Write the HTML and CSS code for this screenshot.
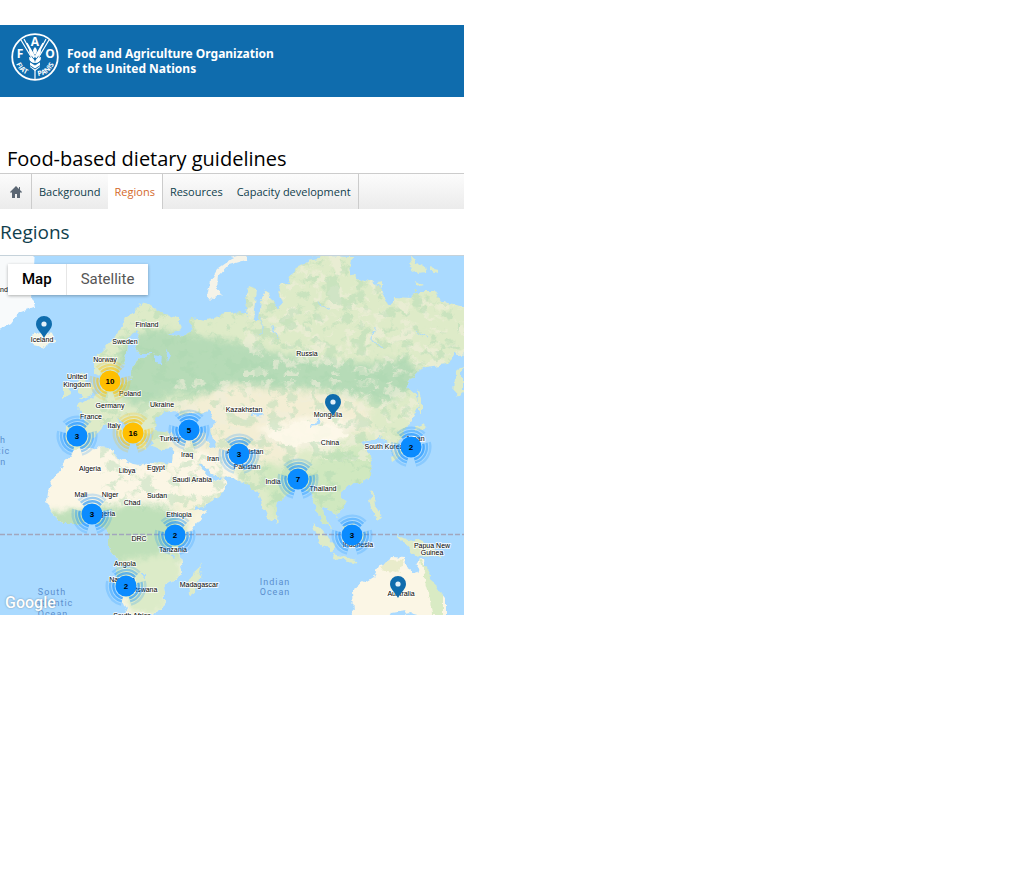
FILE: index.html
```html
<!DOCTYPE html>
<html lang="en">
<head>
<meta charset="utf-8">
<meta name="viewport" content="width=device-width, initial-scale=1">
<title>Food-based dietary guidelines</title>
<link rel="stylesheet" href="styles.css">
</head>
<body>
<div class="page">
  <header class="banner">
    <a class="brand" href="#">
      <svg class="brand-logo" viewBox="0 0 48 48" aria-hidden="true">
        <circle cx="24" cy="24" r="22.8" fill="none" stroke="#fff" stroke-width="1.8"/>
        <g fill="none" stroke="#fff" stroke-width="1.2">
          <path d="M10 7l12 20M13 6l10 19M16 10l8 14M38 7L26 27M35 6L25 25M32 10l-8 14"/>
          <path d="M24 31v15" stroke-width="1.2"/>
        </g>
        <path fill="#fff" d="M24 14q4 4 0 8q-4-4 0-8zM18 17q5 1 5 7q-5-1-5-7zM30 17q-5 1-5 7q5-1 5-7zM18 24q6 1 6 6q-6 0-6-6zM30 24q-6 1-6 6q6 0 6-6zM19 29l5 3 5-3v5l-5 4-5-4z"/>
        <path fill="none" stroke="#0f6cad" stroke-width="1" d="M18 28l6 4 6-4M18 32l6 4 6-4"/>
        <g class="logo-letters"><text x="9" y="25">F</text><text x="24" y="13">A</text><text x="39" y="25">O</text></g>
        <path id="motto-left" d="M5 31Q10 42 22 43" fill="none"/>
        <path id="motto-right" d="M27 43Q38 42 43 31" fill="none"/>
        <g class="logo-motto"><text><textPath href="#motto-left">FIAT</textPath></text><text><textPath href="#motto-right">PANIS</textPath></text></g>
      </svg>
      <span class="brand-name">Food and Agriculture Organization<br>of the United Nations</span>
    </a>
  </header>

  <p class="site-title">Food-based dietary guidelines</p>
  <nav class="tabs" aria-label="Main">
    <a class="tab tab-home" href="#" aria-label="Home">
      <svg viewBox="0 0 12 12" aria-hidden="true"><path d="M6 0L0 6l1 1 1-1v6h3V8h2v4h3V6l1 1 1-1-2-2V1H9v2z"/></svg>
    </a>
    <a class="tab" href="#">Background</a>
    <a class="tab tab-active" href="#" aria-current="page">Regions</a>
    <a class="tab" href="#">Resources</a>
    <a class="tab tab-last" href="#">Capacity development</a>
  </nav>

  <main>
    <h1 class="heading">Regions</h1>
    <section class="map" aria-label="Map of regions">
      <svg class="map-drawing" viewBox="0 256 464 359" preserveAspectRatio="xMinYMin slice" aria-hidden="true">
        <defs>
          <filter id="coast" x="-5%" y="-5%" width="110%" height="110%">
            <feTurbulence type="fractalNoise" baseFrequency=".12" numOctaves="3" seed="4"/>
            <feDisplacementMap in="SourceGraphic" scale="8" xChannelSelector="R" yChannelSelector="G"/>
          </filter>
          <filter id="patches" x="0" y="0" width="100%" height="100%">
            <feTurbulence type="fractalNoise" baseFrequency=".07 .09" numOctaves="4" seed="8" result="n"/>
            <feColorMatrix in="n" values="0 0 0 0 0  0 0 0 0 0  0 0 0 0 0  0 9 0 0 -4.7" result="m"/>
            <feComposite in="SourceGraphic" in2="m" operator="in"/>
          </filter>
          <filter id="soft"><feGaussianBlur stdDeviation="3"/></filter>
          <path id="eurasia" d="M147 303L138 307 126 318 118 334 105 348 94 360 94 373 101 377 107 370 110 384 116 382 121 368 126 355 127 340 136 331 139 335 136 347 141 354 156 354 141 358 133 366 131 379 120 386 107 389 107 382 101 384 101 392 94 396 86 401 77 407 83 415 84 425 66 426 66 446 75 451 90 446 95 435 103 426 112 424 116 430 126 442 130 438 120 425 118 419 126 424 137 438 140 449 146 451 146 438 154 432 151 446 161 449 173 448 171 463 164 465 172 480 183 500 188 513 205 505 220 496 228 483 224 477 211 481 199 465 202 463 212 475 230 478 248 485 258 492 263 507 270 523 275 518 278 503 292 491 297 484 307 490 313 500 320 518 330 529 326 516 321 506 331 510 336 517 345 506 341 493 346 487 360 483 370 474 372 462 366 448 361 442 372 440 379 437 388 442 394 456 402 452 398 440 409 424 419 406 416 395 406 386 415 374 426 367 446 364 455 355 470 354V308L442 302 434 291 415 291 411 298 395 297 390 304 380 288 370 281 350 275 352 257 325 256 308 260 292 270 290 283 277 284 283 304 277 309 266 290 260 302 258 322 253 318 257 289 249 286 245 300 248 317 240 311 221 315 205 321 192 318 190 333 180 338 168 334 181 329 177 318 161 312z"/>
          <path id="africa" d="M75 450L65 462 49 486 47 501 52 513 63 524 78 524 92 520 100 527 108 529 108 544 119 562 115 583 122 600 129 616H154L165 602 164 586 182 574 179 548 191 532 206 509 192 512 183 499 170 476 165 464 151 462 143 465 132 464 117 457 111 448 92 447z"/>
          <clipPath id="land"><use href="#eurasia"/><use href="#africa"/></clipPath>
        </defs>
        <rect y="256" width="464" height="359" fill="#aadaff"/>
        <g filter="url(#coast)">
          <path fill="#f8fafb" d="M-8 250H35L34 268 38 284 32 297 34 307 20 312 12 323-8 334z"/>
          <path fill="#f4f5e5" d="M31 335l8-3 14 2 3 6-10 7-13-3z"/>
          <path fill="#f5f3e8" d="M207 298l3-17 8-14 13-9 16-4-1 6-17 5-10 11-1 13 3 7-5 3z"/>
          <g fill="#deebc8">
            <use href="#eurasia"/>
            <path d="M77 374l6-2 2 7 7 8 1 8-14 5 4-6-6-4zM62 387l9-3 1 9-10 5zM409 257l4 0 2 7 8-2 2 9-13 2zM429 267l10 2-1 4-9-3zM415 281l9 3-7 2zM375 283l7-1 0 6zM418 389l4 8v18l-3-5zM415 427l8-4 4 4-11 4zM405 442l8-9 6 8-3 9-14 5-10 7-1-5 13-6zM274 513l5 4-2 5-4-3z"/>
            <path d="M311 522l10 7 14 18-2 5-12-9zM334 554l22 6-2 3-21-5zM342 529l11-6 4 8-6 18-9-8zM359 534l9-2-5 5 5 10-7-3zM371 491l4 5 1 11 6 10-3 4-7-8-4-13zM396 535l12 5 8-1 18 8 8 12-13-5-14 2-11-13z"/>
            <path d="M202 563l-6 29-7 3-1-13 7-8zM456 373l6-8v28l-7 5z"/>
          </g>
          <use href="#africa" fill="#fbf6e5"/>
          <path fill="#fbf6e5" d="M353 618l-1-29 12-7 10-6 5-10 8-2 4-7 14 1 1 9 9 6 5-15 4 2 2 14 7 12 12 14v18h-20l-15-4-21 4z"/>
          <path fill="#e9eccb" d="M379 569l8-9 17 1-5 11z"/>
          <path fill="#d9ebc4" d="M419 558l7 10 16 28v19h-10l-3-22z"/>
          <path fill="#aadaff" d="M388 618l4-5 12-2 4 7z"/>
          <g clip-path="url(#land)">
            <g filter="url(#soft)">
              <path fill="#b6dbb7" d="M126 337l36-8 80 15 55 14 70 5 42-5 15 20-35 25-60-12-50-3-35 10-70-5-40 13-25-18z"/>
              <path fill="#f3eed4" d="M164 415l30-15 35-16 40 4 70 5 30 15 2 23-50 5-40 25-70 10-40-15z"/>
              <path fill="#fbf6e5" d="M165 449l40 1 30 15 5 20-50 30-25-49zM256 427l55-11 46 5-25 29-47-3z"/>
              <path fill="#d0e8bf" d="M260 460l35 16 40-27 50-5-10 50-45 35-55-10z"/>
              <path fill="#bfe0b9" d="M45 512l60-5 35-4 35 6 12 18-10 50-35 20-30-10-15-60-35 5z"/>
              <path fill="#dcebc8" d="M115 562l60-10 10 30-30 35-25-4z"/>
              <path fill="#f5f2d9" d="M173 496l40 5-25 30-12-8z"/>
            </g>
            <g filter="url(#patches)">
              <path fill="#f0eeda" opacity=".6" d="M244 256h220v120H244zM165 380h260v80H165z"/>
            </g>
            <g filter="url(#patches)" transform="rotate(180 255 430)">
              <path fill="#a9d6ae" opacity=".4" d="M50 350h360v250H50z"/>
            </g>
            <path fill="#fdf8e9" opacity=".9" d="M268 434l30-12 33 4 18 8-33 8-28 4z"/>
          </g>
          <g fill="#aadaff">
            <path d="M154 431l4-15 15-5 9 5 18-4 8 9 4 11-18 1-13 4-15-5zM200 413l9-4 6 13-3 8 4 17-6 1-6-15z"/>
            <path d="M251 413l12 0-1 3-11 1zM156 355l6 2-1 7-5-3zM166 349l5 5-3 8zM310 427l6-4 4-10 2 3-5 10z"/>
            <path d="M145 579l-4-6 4 0zM168 529l6 0 0 7-7 1zM168 533l1 12-3-9zM172 550l3 10-3-2z"/>
          </g>
          <path fill="none" stroke="#aadaff" d="M261 318v17M272 323l6 18M330 310l-13-8M374 326l-1 16 9 5M415 330l12 8"/>
        </g>
        <path d="M0 534.5H464" stroke="#a2a6bd" stroke-width="1.5" stroke-dasharray="5 2"/>
        <g class="map-label">
          <text x="2" y="292">and</text>
          <text x="42" y="342">Iceland</text><text x="147" y="327">Finland</text><text x="125" y="344">Sweden</text>
          <text x="105" y="362">Norway</text><text x="307" y="356">Russia</text><text x="77" y="379">United</text>
          <text x="77" y="387">Kingdom</text><text x="130" y="396">Poland</text><text x="110" y="408">Germany</text>
          <text x="162" y="407">Ukraine</text><text x="91" y="419">France</text><text x="114" y="428">Italy</text>
          <text x="170" y="441">Turkey</text><text x="244" y="412">Kazakhstan</text><text x="328" y="417">Mongolia</text>
          <text x="330" y="445">China</text><text x="384" y="449">South Korea</text><text x="415" y="441">Japan</text>
          <text x="90" y="471">Algeria</text><text x="127" y="473">Libya</text><text x="156" y="470">Egypt</text>
          <text x="187" y="457">Iraq</text><text x="213" y="461">Iran</text><text x="245" y="454">Afghanistan</text>
          <text x="247" y="469">Pakistan</text><text x="192" y="482">Saudi Arabia</text><text x="273" y="484">India</text>
          <text x="323" y="491">Thailand</text><text x="81" y="497">Mali</text><text x="110" y="497">Niger</text>
          <text x="132" y="505">Chad</text><text x="157" y="498">Sudan</text><text x="104" y="516">Nigeria</text>
          <text x="179" y="517">Ethiopia</text><text x="139" y="541">DRC</text><text x="173" y="552">Tanzania</text>
          <text x="125" y="566">Angola</text><text x="122" y="582">Namibia</text><text x="142" y="592">Botswana</text>
          <text x="199" y="587">Madagascar</text><text x="132" y="618">South Africa</text><text x="358" y="547">Indonesia</text>
          <text x="432" y="548">Papua New</text><text x="432" y="555">Guinea</text><text x="401" y="596">Australia</text>
        </g>
        <g class="ocean-label">
          <text x="-8" y="443">North</text><text x="-9" y="454">Atlantic</text><text x="-9" y="465">Ocean</text>
          <text x="52" y="595">South</text><text x="54" y="606">Atlantic</text><text x="53" y="617">Ocean</text>
          <text x="275" y="585">Indian</text><text x="275" y="595">Ocean</text>
        </g>
        <symbol id="rings" viewBox="-21 -21 42 42">
          <g fill="none" stroke="currentColor" stroke-width="2.4" transform="rotate(-15)">
            <circle r="12.7" pathLength="360" stroke-dasharray="90 30" opacity=".6"/>
            <circle r="16" pathLength="360" stroke-dasharray="90 30" opacity=".4"/>
            <circle r="19.3" pathLength="360" stroke-dasharray="90 30" opacity=".2"/>
          </g>
          <circle r="10.5" fill="currentColor"/>
        </symbol>
        <symbol id="pin" viewBox="0 0 16 22"><path fill="#0f6cad" fill-rule="evenodd" d="M8 0a8 8 0 0 1 8 8c0 5-5 8-8 14C5 16 0 13 0 8a8 8 0 0 1 8-8z"/><circle cx="8" cy="8" r="2.6" fill="#e3f1fa"/></symbol>
      </svg>

      <button class="cluster cluster-large" style="--x:110px;--y:125px"><svg aria-hidden="true"><use href="#rings"/></svg><span>10</span></button>
      <button class="cluster cluster-large" style="--x:133px;--y:177px"><svg aria-hidden="true"><use href="#rings"/></svg><span>16</span></button>
      <button class="cluster" style="--x:77px;--y:180px"><svg aria-hidden="true"><use href="#rings"/></svg><span>3</span></button>
      <button class="cluster" style="--x:189px;--y:174px"><svg aria-hidden="true"><use href="#rings"/></svg><span>5</span></button>
      <button class="cluster" style="--x:239px;--y:198px"><svg aria-hidden="true"><use href="#rings"/></svg><span>3</span></button>
      <button class="cluster" style="--x:298px;--y:223px"><svg aria-hidden="true"><use href="#rings"/></svg><span>7</span></button>
      <button class="cluster" style="--x:411px;--y:191px"><svg aria-hidden="true"><use href="#rings"/></svg><span>2</span></button>
      <button class="cluster" style="--x:92px;--y:258px"><svg aria-hidden="true"><use href="#rings"/></svg><span>3</span></button>
      <button class="cluster" style="--x:175px;--y:279px"><svg aria-hidden="true"><use href="#rings"/></svg><span>2</span></button>
      <button class="cluster" style="--x:352px;--y:279px"><svg aria-hidden="true"><use href="#rings"/></svg><span>3</span></button>
      <button class="cluster" style="--x:126px;--y:330px"><svg aria-hidden="true"><use href="#rings"/></svg><span>2</span></button>
      <button class="pin" aria-label="Iceland" style="--x:44px;--y:82px"><svg aria-hidden="true"><use href="#pin"/></svg></button>
      <button class="pin" aria-label="Mongolia" style="--x:333px;--y:160px"><svg aria-hidden="true"><use href="#pin"/></svg></button>
      <button class="pin" aria-label="Australia" style="--x:398px;--y:342px"><svg aria-hidden="true"><use href="#pin"/></svg></button>

      <div class="map-type" role="group" aria-label="Map type">
        <button class="map-type-button map-type-selected" aria-pressed="true">Map</button>
        <button class="map-type-button" aria-pressed="false">Satellite</button>
      </div>
      <a class="map-credit" href="#">Google</a>
    </section>
  </main>
</div>
</body>
</html>
```
FILE: styles.css
```css
* { box-sizing: border-box; }
body { margin: 0; background: #fff; font-family: "Open Sans", sans-serif; }
a { color: inherit; text-decoration: none; }
button { margin: 0; padding: 0; border: 0; background: none; font: inherit; cursor: pointer; }

.page { max-width: 464px; padding-top: 25px; }

.banner { padding: 8px 11px 16px; background: #0f6cad; color: #fff; }
.brand { display: flex; align-items: center; gap: 8px; font: 700 12px/15px "Noto Sans", sans-serif; }
.brand-logo { width: 48px; height: 48px; flex: none; }
.brand-name { padding-top: 8px; }
.logo-letters { fill: #fff; font: 700 12px "Open Sans", sans-serif; text-anchor: middle; }
.logo-motto { fill: #fff; font: 700 7px "Open Sans", sans-serif; }

.site-title { margin: 48px 0 0; padding-left: 7px; font-size: 20px; line-height: 28px; color: #000; }

.tabs { display: flex; height: 36px; border-top: 1px solid #ccc; background: linear-gradient(#fcfcfc, #ebebeb); font-size: 11px; color: #10404c; }
.tab { display: flex; align-items: center; padding: 0 7px; white-space: nowrap; }
.tab-home { width: 32px; padding: 0 0 0 10px; border-right: 1px solid #ccc; }
.tab-home svg { width: 12px; height: 12px; fill: #5b6673; }
.tab-active { border-right: 1px solid #ccc; background: #fff; color: #d4692b; }
.tab-last { border-right: 1px solid #ccc; }

.heading { margin: 0; padding: 9px 0; font-size: 19px; font-weight: 400; line-height: 28px; color: #10404c; }

.map { position: relative; height: 360px; overflow: hidden; border-top: 1px solid #c5d2da; background: #aadaff; }
.map-drawing { display: block; width: 100%; height: 100%; }
.map-label { font: 7px "Liberation Sans", sans-serif; fill: #000; stroke: #fff; stroke-width: 2px; stroke-linejoin: round; stroke-opacity: .8; paint-order: stroke; text-anchor: middle; }
.ocean-label { font: 9px Roboto, sans-serif; fill: #5b8fce; letter-spacing: 1px; text-anchor: middle; }

.cluster, .pin { position: absolute; left: var(--x); top: var(--y); }
.cluster { display: grid; place-items: center; width: 42px; height: 42px; transform: translate(-50%, -50%); color: #0a8bff; font: 700 8px "Liberation Sans", sans-serif; }
.cluster svg, .cluster span { grid-area: 1 / 1; }
.cluster svg { width: 42px; height: 42px; }
.cluster span { color: #000; }
.cluster-large { color: #ffbf00; }
.pin { width: 16px; height: 22px; transform: translate(-50%, -100%); }
.pin svg { display: block; width: 16px; height: 22px; }

.map-type { position: absolute; left: 8px; top: 8px; display: flex; background: #fff; box-shadow: 0 1px 3px rgba(0, 0, 0, .3); font: 15px/31px Roboto, sans-serif; }
.map-type-button { padding: 0 14px; color: #565656; }
.map-type-selected { border-right: 1px solid #e6e6e6; color: #000; font-weight: 500; }
.map-credit { position: absolute; left: 5px; bottom: 3px; color: #fff; font: 500 16px/18px Roboto, sans-serif; text-shadow: 0 0 2px #6f8ba0; }
```
